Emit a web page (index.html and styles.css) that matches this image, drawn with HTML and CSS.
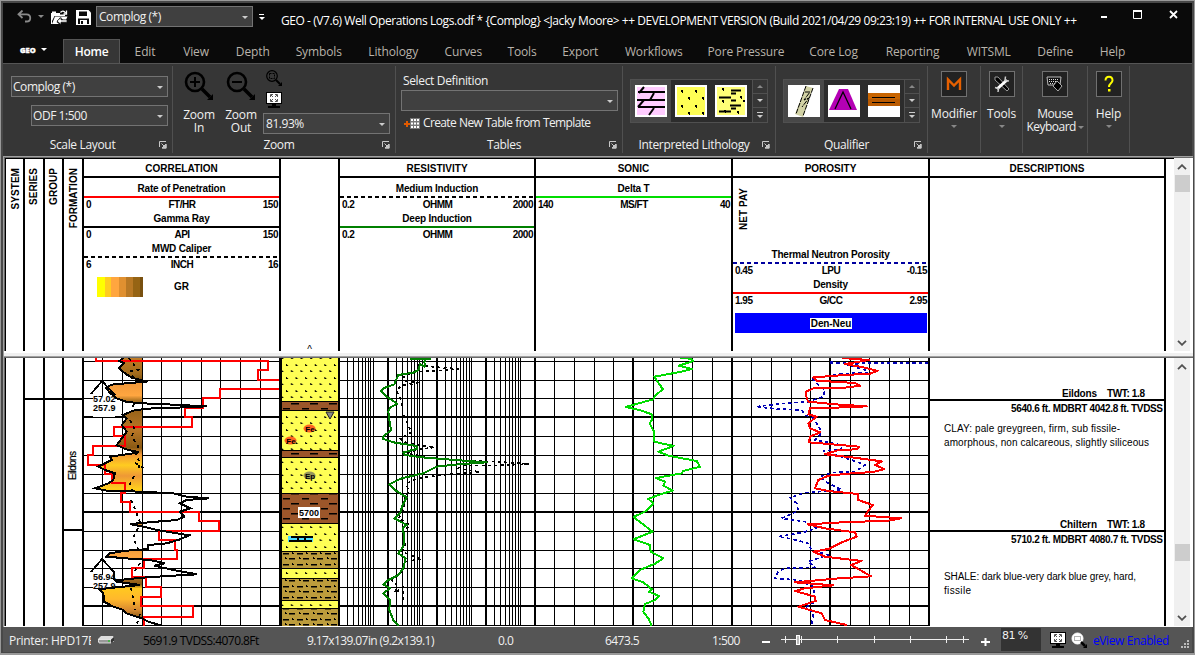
FILE: index.html
```html
<!DOCTYPE html>
<html lang="en">
<head>
<meta charset="utf-8">
<title>GEO - Well Operations Logs</title>
<link rel="stylesheet" href="styles.css">
</head>
<body>
<svg width="0" height="0" class="defs">
  <defs>
    <symbol id="launch" viewBox="0 0 8 8"><path d="M.5 6V.5H7M2.500 2.500l3 3M7 3v4H3z" fill="none" stroke="#c8c8c8"/><path d="M7.500 3v4.500H3z" fill="#c8c8c8"/></symbol>
    <symbol id="chev" viewBox="0 0 10 6"><path d="M1 5.200 5 1.200 9 5.200" fill="none" stroke="#505050" stroke-width="1.800"/></symbol>
    <symbol id="fit" viewBox="0 0 16 16"><rect width="16" height="12" fill="#000"/><rect x="1" y="1" width="14" height="10" fill="#fff"/><path d="M4.500 5V2.500H7M9 2.500h2.500V5M11.500 7v2.500H9M7 9.500H4.500V7M5 3l2 2M9 7l2 2M11 3 9 5M7 7 5 9" fill="none" stroke="#555"/><path d="M6 12h4v2H6zM2 14h12v2H2z" fill="#000"/></symbol>
    <symbol id="dotlines" viewBox="0 0 32 32"><path d="M7 3h2v3H8V5H7zM25 11h2v3h-1v-1h-1zM7 15h2v3H8v-1H7zM9 25h2v3h-1v-1H9zM22 26h2v3h-1v-1h-1zM28 15h2v2h-2z"/><path d="M16 5.500h10M16 8.500h5M4 12.500h12M16 15.500h5M15 20.500h11M16 23.500h5M4 26.500h12" stroke="#000" stroke-width="1.800"/></symbol>
  </defs>
</svg>
<div class="window">
  <header class="titlebar">
    <svg class="i-undo" width="15" height="13" viewBox="0 0 15 13"><path d="M5.500.5 1.500 4.300l4 3.700M2 4.300h7.500c5 0 5 7.200 0 7.200H8" fill="none" stroke="#8a8a8a" stroke-width="1.800"/></svg>
    <i class="tri dim t-undo"></i>
    <svg class="i-open" width="17" height="15" viewBox="0 0 17 15"><path d="M0 3h1V1.500h4V3h4v1.500h5V6H3.500L1 11v3H0z" fill="#fff"/><path d="M4 6.500h12.500L14 12h-2V9.500L9 7.500 5.500 12 8 14H1z" fill="#fff"/><path d="M9.500 2.500c1.500-2 3.500-2 5 .5M15.500.5v3.500h-3" fill="none" stroke="#fff" stroke-width="1.300"/><path d="M6 11 10 7.500v2.300h6v2.400h-6v2.300z" fill="#fff" stroke="#0a0a0a" stroke-width=".7"/></svg>
    <svg class="i-save" width="15" height="15" viewBox="0 0 15 15"><path d="M0 0h12.500L15 2.500V15H0z" fill="#fff"/><path d="M3 1.500h8v4.500H3zM2 8.500h11V14H2z" fill="#0a0a0a"/><path d="M4 10h7v4H4z" fill="#fff"/><path d="M5 11h2v3H5z" fill="#0a0a0a"/></svg>
    <div class="combo c-title"><span>Complog (*)</span><i class="tri"></i></div>
    <div class="more"><b></b><i class="tri white"></i></div>
    <div class="caption">GEO - (V7.6) Well Operations Logs.odf * {Complog} &lt;Jacky Moore&gt; ++ DEVELOPMENT VERSION (Build 2021/04/29 09:23:19) ++ FOR INTERNAL USE ONLY ++</div>
    <svg class="winbtns" width="78" height="12" viewBox="0 0 78 12"><path d="M0 8h6" stroke="#fff" stroke-width="2"/><path d="M32.500 1.500h8v8h-8z" fill="none" stroke="#fff"/><path d="M32 2h9" stroke="#fff" stroke-width="2"/><path d="m69 2 7 7m0-7-7 7" stroke="#fff" stroke-width="1.800"/></svg>
  </header>
  <nav class="tabs">
    <div class="app"><b>GEO</b><i class="tri white"></i></div>
    <div class="tab active">Home</div><div class="tab">Edit</div><div class="tab">View</div><div class="tab">Depth</div><div class="tab">Symbols</div><div class="tab">Lithology</div><div class="tab">Curves</div><div class="tab">Tools</div><div class="tab">Export</div><div class="tab">Workflows</div><div class="tab">Pore Pressure</div><div class="tab">Core Log</div><div class="tab">Reporting</div><div class="tab">WITSML</div><div class="tab">Define</div><div class="tab">Help</div>
  </nav>
  <section class="ribbon">
    <div class="group">
      <div class="body scale">
        <div class="combo"><span>Complog (*)</span><i class="tri"></i></div>
        <div class="combo narrow"><span>ODF 1:500</span><i class="tri"></i></div>
      </div>
      <div class="foot"><span>Scale Layout</span><svg width="8" height="8"><use href="#launch"/></svg></div>
    </div>
    <div class="group">
      <div class="body zoom">
        <div class="big"><svg width="30" height="30" viewBox="0 0 30 30"><circle cx="11" cy="11" r="9" fill="none" stroke="#000" stroke-width="2.600"/><path d="M6 11h10M11 6v10" stroke="#000" stroke-width="2"/><path d="m18 18 8 8" stroke="#000" stroke-width="3.500"/><path d="M29 23v6h-6z"/></svg><span>Zoom<br>In</span></div>
        <div class="big"><svg width="30" height="30" viewBox="0 0 30 30"><circle cx="11" cy="11" r="9" fill="none" stroke="#000" stroke-width="2.600"/><path d="M6 11h10" stroke="#000" stroke-width="2"/><path d="m18 18 8 8" stroke="#000" stroke-width="3.500"/><path d="M29 23v6h-6z"/></svg><span>Zoom<br>Out</span></div>
        <div class="zcol">
          <svg width="17" height="17" viewBox="0 0 17 17"><circle cx="6" cy="6" r="5.300" fill="none" stroke="#000" stroke-width="1.200"/><path d="M3.500 3.500h5v5h-5z" fill="none" stroke="#000" stroke-dasharray="2 1"/><path d="m10 10 4 4" stroke="#000" stroke-width="2"/><path d="M16 12v4h-4z"/></svg>
          <svg width="16" height="16"><use href="#fit"/></svg>
          <div class="combo"><span>81.93%</span><i class="tri"></i></div>
        </div>
      </div>
      <div class="foot"><span>Zoom</span><svg width="8" height="8"><use href="#launch"/></svg></div>
    </div>
    <div class="group">
      <div class="body tables">
        <div class="lbl">Select Definition</div>
        <div class="combo"><span></span><i class="tri"></i></div>
        <div class="create"><svg width="16" height="11" viewBox="0 0 16 11"><path d="M0 6h6M3 3v6" stroke="#e05a00" stroke-width="2"/><path d="M6 0h10v11H6z" fill="#777"/><path d="M7 1h2v2H7zM10 1h2v2h-2zM13 1h2v2h-2zM7 4.500h2v2H7zM10 4.500h2v2h-2zM13 4.500h2v2h-2zM7 8h2v2H7zM10 8h2v2h-2zM13 8h2v2h-2z" fill="#fff"/></svg><span>Create New Table from Template</span></div>
      </div>
      <div class="foot"><span>Tables</span><svg width="8" height="8"><use href="#launch"/></svg></div>
    </div>
    <div class="group">
      <div class="body">
        <div class="gallery">
          <div class="tile sel"><svg width="32" height="32"><rect width="32" height="32" fill="#fff"/><rect x="2" y="2" width="28" height="28" fill="#fcf"/><path d="M3 7h27M2 15h28M3 22h27M9 2 4 8M19 8l-4 7M9 15l-6 7M19 23l-5 7" stroke="#000" stroke-width="2" fill="none"/></svg></div>
          <div class="tile"><svg width="32" height="32"><rect width="32" height="32" fill="#fff"/><rect x="2" y="2" width="28" height="28" fill="#ff5"/><path d="M6 5h2v3H7V7H6zM20 5h2v3h-1V7h-1zM13 12h2v3h-1v-1h-1zM27 12h2v3h-1v-1h-1zM6 20h2v3H7v-1H6zM20 20h2v3h-1v-1h-1zM13 27h2v3h-1v-1h-1zM27 27h2v3h-1v-1h-1z"/></svg></div>
          <div class="tile"><svg width="32" height="32"><rect width="32" height="32" fill="#fff"/><rect x="2" y="2" width="28" height="28" fill="#ff7"/><use href="#dotlines" width="32" height="32"/></svg></div>
          <div class="spin"><span><i class="tri up"></i></span><span><i class="tri"></i></span><span><b></b><i class="tri"></i></span></div>
        </div>
      </div>
      <div class="foot"><span>Interpreted Lithology</span><svg width="8" height="8"><use href="#launch"/></svg></div>
    </div>
    <div class="group">
      <div class="body">
        <div class="gallery">
          <div class="tile sel"><svg width="32" height="32"><rect width="32" height="32" fill="#fff"/><path d="M18 1 25 3 15 32 7 29z" fill="#d2d2a5"/><path d="M18 1 8 29M25 3 15 31M17 7l5 0-6 8 5-2-7 9" fill="none" stroke="#000" stroke-dasharray="5 1"/></svg></div>
          <div class="tile"><svg width="32" height="32"><rect width="32" height="32" fill="#fff"/><path d="M11 4h9l9 21H1z" fill="#b400b4"/><path d="M7 24 15 7l8 17" fill="none" stroke="#000" stroke-width="1.300"/></svg></div>
          <div class="tile"><svg width="32" height="32"><rect width="32" height="32" fill="#fff"/><rect y="8" width="32" height="13" fill="#c86400"/><path d="M0 14h32v7H0z" fill="#b95a00"/><path d="M4 12.500h23M4 17.500h23" stroke="#000"/></svg></div>
          <div class="spin"><span><i class="tri up"></i></span><span><i class="tri"></i></span><span><b></b><i class="tri"></i></span></div>
        </div>
      </div>
      <div class="foot"><span>Qualifier</span><svg width="8" height="8"><use href="#launch"/></svg></div>
    </div>
    <div class="group tool"><svg width="26" height="26"><rect x=".5" y=".5" width="25" height="25" fill="#222" stroke="#707070"/><path d="M7 19V8.500l6 6 6-6V19" fill="none" stroke="#e66000" stroke-width="2.400"/></svg><span>Modifier</span><i class="tri dim"></i></div>
    <div class="group tool"><svg width="26" height="26"><rect x=".5" y=".5" width="25" height="25" fill="#222" stroke="#707070"/><path d="M6 6l3 0 11 12-2 2L6 9z" fill="#000" stroke="#999"/><path d="M18 9 8 18" stroke="#fff" stroke-width="3"/><path d="M16.500 5.500 16 9.500l4 .5M6 16.500l3.500 1-.5 3.500" fill="none" stroke="#ccc" stroke-width="1.500"/></svg><span>Tools</span><i class="tri dim"></i></div>
    <div class="group tool mouse"><svg width="26" height="26"><rect x=".5" y=".5" width="25" height="25" fill="#222" stroke="#707070"/><path d="M5 6h14l-1 8H6z" fill="#111" stroke="#bbb"/><path d="M7 8.500h10M7 10.500h8M8 12.500h6" stroke="#ddd" stroke-dasharray="1 1"/><path d="m15 10 5 5-4 5-5-5z" fill="#000" stroke="#aaa" stroke-width="1"/></svg><span>Mouse<br>Keyboard <i class="tri dim"></i></span></div>
    <div class="group tool"><svg width="26" height="26"><rect x=".5" y=".5" width="25" height="25" fill="#222" stroke="#707070"/><path d="M9.500 9.500c0-5 7-5 7 0 0 2.500-3.500 2.500-3.500 6.500" fill="none" stroke="#ff0" stroke-width="2"/><path d="M12 18h2.500v2.500H12z" fill="#ff0"/></svg><span>Help</span><i class="tri dim"></i></div>
  </section>
  <main class="work">
    <div class="pane">
      <div class="heads">
        <div class="h side"><span>SYSTEM</span></div>
        <div class="h side"><span>SERIES</span></div>
        <div class="h side"><span>GROUP</span></div>
        <div class="h side"><span>FORMATION</span></div>
        <div class="h"><h2>CORRELATION</h2>
          <div class="curve red"><p>Rate of Penetration</p><div><span>0</span><span>FT/HR</span><span>150</span></div></div>
          <div class="curve"><p>Gamma Ray</p><div><span>0</span><span>API</span><span>150</span></div></div>
          <div class="curve dash"><p>MWD Caliper</p><div><span>6</span><span>INCH</span><span>16</span></div></div>
          <div class="shade"><i></i><span>GR</span></div>
        </div>
        <div class="h depth"><span>^</span></div>
        <div class="h"><h2>RESISTIVITY</h2>
          <div class="curve dash"><p>Medium Induction</p><div><span>0.2</span><span>OHMM</span><span>2000</span></div></div>
          <div class="curve green"><p>Deep Induction</p><div><span>0.2</span><span>OHMM</span><span>2000</span></div></div>
        </div>
        <div class="h"><h2>SONIC</h2>
          <div class="curve lime"><p>Delta T</p><div><span>140</span><span>MS/FT</span><span>40</span></div></div>
        </div>
        <div class="h"><h2>POROSITY</h2>
          <div class="netpay"><span>NET PAY</span></div>
          <div class="curve dash blue"><p>Thermal Neutron Porosity</p><div><span>0.45</span><span>LPU</span><span>-0.15</span></div></div>
          <div class="curve red"><p>Density</p><div><span>1.95</span><span>G/CC</span><span>2.95</span></div></div>
          <div class="denneu"><span>Den-Neu</span></div>
        </div>
        <div class="h"><h2>DESCRIPTIONS</h2></div>
        <div class="h"></div>
      </div>
      <div class="scroll s-top"><svg width="10" height="6"><use href="#chev"/></svg><i></i><svg class="dn" width="10" height="6"><use href="#chev"/></svg></div>
    </div>
    <div class="split"></div>
    <div class="pane">
      <svg class="log" width="1169" height="268" viewBox="5 358 1169 268">
        <defs>
          <pattern id="sand" x="285" y="363" width="9.600" height="13" patternUnits="userSpaceOnUse"><rect width="10" height="13" fill="#ff5"/><path d="M1 1h1v1h1v1H1zM6 7h1v1h1v1H6z"/></pattern>
          <pattern id="clay" x="282" y="401" width="19" height="10" patternUnits="userSpaceOnUse"><rect width="19" height="10" fill="#9c562a"/><path d="M9 2h8v1.500H9zM1 7h7v1.500H1z"/></pattern>
          <pattern id="silt" x="282" y="551" width="14" height="11" patternUnits="userSpaceOnUse"><rect width="14" height="11" fill="#bc9c3c"/><path d="M1 2h6v1.400H1zM10 1h1v1h1v1h-2zM7 7h6v1.400H7zM3 6h1v1h1v1H3z"/></pattern>
          <linearGradient id="gr" gradientUnits="userSpaceOnUse" x1="0" x2="0" y1="358" y2="626">
            <stop offset="0" stop-color="#c07a24"/><stop offset=".06" stop-color="#a06a1c"/><stop offset=".082" stop-color="#7c5210"/><stop offset=".09" stop-color="#f0983a"/><stop offset=".14" stop-color="#ffa640"/><stop offset=".16" stop-color="#a87020"/><stop offset=".2" stop-color="#9a641a"/><stop offset=".27" stop-color="#b87626"/><stop offset=".335" stop-color="#8a5a14"/><stop offset=".36" stop-color="#f09636"/><stop offset=".4" stop-color="#ffcc20"/><stop offset=".44" stop-color="#ee9836"/><stop offset=".49" stop-color="#ffd01c"/><stop offset=".51" stop-color="#c47c28"/><stop offset=".7" stop-color="#e89838"/><stop offset=".74" stop-color="#ffa640"/><stop offset=".8" stop-color="#c88030"/><stop offset=".845" stop-color="#8a5a14"/><stop offset=".86" stop-color="#ffc820"/><stop offset=".9" stop-color="#ffb82c"/><stop offset=".94" stop-color="#d88a30"/><stop offset=".97" stop-color="#8a5a14"/><stop offset="1" stop-color="#8a5a14"/>
          </linearGradient>
          <clipPath id="left"><path d="M83 358h59v268H83z"/></clipPath>
          <path id="gamma" d="M370 38 358 48 372 55 357 70 375 85 395 98 442 110 400 113 335 119 318 128 328 142 350 160 380 171 430 175 500 178 620 184 530 188 440 191 400 197 368 210 380 220 365 240 380 260 365 280 350 300 375 312 417 322 380 328 330 335 335 345 295 365 315 375 345 385 340 405 325 415 285 430 320 437 420 440 520 445 560 455 627 460 560 465 540 475 570 490 540 500 553 515 530 525 470 530 390 537 430 545 470 555 530 565 568 571 540 583 500 595 445 600 445 612 380 617 330 625 320 635 390 641 450 645 495 655 462 662 530 677 592 688 520 692 440 697 345 706 350 710 420 720 340 728 297 733 310 745 312 770 340 785 370 795 380 805 425 820 450 832 488 842"/>
        </defs>
        <rect x="5" y="358" width="1169" height="268" fill="#fff"/>
        <g shape-rendering="crispEdges" stroke="#000" fill="none">
          <path d="M83 361.500H929M83 380.500H929M83 398.500H929M83 436.500H929M83 455.500H929M83 474.500H929M83 493.500H929M83 531.500H929M83 550.500H929M83 568.500H929M83 587.500H929M83 625.500H929"/>
          <path d="M83 417H929M83 512H929M83 606H929" stroke-width="2"/>
          <path d="M102.500 358v268M122.500 358v268M142.500 358v268M161.500 358v268M181.500 358v268M201.500 358v268M220.500 358v268M240.500 358v268M260.500 358v268"/>
          <path d="M347.500 358v268M353.500 358v268M358.500 358v268M362.500 358v268M365.500 358v268M368.500 358v268M370.500 358v268M373.500 358v268M396.500 358v268M402.500 358v268M407.500 358v268M411.500 358v268M414.500 358v268M417.500 358v268M419.500 358v268M422.500 358v268M445.500 358v268M451.500 358v268M456.500 358v268M460.500 358v268M463.500 358v268M466.500 358v268M469.500 358v268M471.500 358v268M494.500 358v268M500.500 358v268M505.500 358v268M509.500 358v268M512.500 358v268M515.500 358v268M518.500 358v268M520.500 358v268"/>
          <path d="M388 358v268M437 358v268M486 358v268M633 358v268M830 358v268" stroke-width="2"/>
          <path d="M554.500 358v268M574.500 358v268M594.500 358v268M613.500 358v268M653.500 358v268M672.500 358v268M692.500 358v268M712.500 358v268M751.500 358v268M771.500 358v268M791.500 358v268M810.500 358v268M850.500 358v268M869.500 358v268M889.500 358v268M909.500 358v268"/>
          <path d="M24 358v268M44 358v268M63 358v268M83 358v268M339 358v268M535 358v268M732 358v268M929 358v268M1165 358v268M24 399h59M63 530h20M929 400h236M929 531h236" stroke-width="2"/>
          <path d="M5.500 358v268"/>
        </g>
        <g clip-path="url(#left)"><g transform="translate(0 345) scale(.33333)"><path d="M427 38H370L358 48 372 55 357 70 375 85 395 98 442 110 400 113 335 119 318 128 328 142 350 160 380 171 430 175 620 184 440 191 400 197 368 210 380 220 365 240 380 260 365 280 350 300 375 312 417 322 380 328 330 335 335 345 295 365 315 375 345 385 340 405 325 415 285 430 320 437 427 440 627 460 553 515 470 530 390 537 430 545 568 571 445 612 380 617 330 625 320 635 390 641 450 645 592 688 440 697 345 706 350 710 420 720 340 728 297 733 310 745 312 770 340 785 370 795 380 805 427 820z" fill="url(#gr2)"/></g></g>
        <linearGradient id="gr2" href="#gr" gradientTransform="scale(3) translate(0 -345)"/>
        <g shape-rendering="crispEdges">
          <path d="M96 358V361H268V370H258V380H280M280 389H220V398H203V408H185V417H192V427H114V436H125V446H93V455H88V465H105V474H112V483H125V493H121V502H130V512H199V521H219V531H159V540H175V550H177V559H144V568H132V577H146V587H161V597H141V606H193V617H144V626" fill="none" stroke="#f00" stroke-width="2"/>
          <path d="M93 396h22v21H93zM93 575h22v13H93z" fill="#fff"/>
        </g>
        <g class="val"><text x="93" y="401.500">57.02</text><text x="93" y="411">257.9</text><text x="93" y="580">56.94</text><text x="93" y="589">257.9</text></g>
        <g fill="none" stroke="#000" shape-rendering="crispEdges" stroke-width="1.800">
          <path d="m91 394 11-13 13 14M91 572l11-13 12 13v6"/>
          <path d="M129 358l5 7-3 6 11-2M132 376l6 6M134 404l-3 5M130 420l4 8-2 9 6 9-2 8 4 9-2 8M135 463l10 6M134 476l-4 8 3 9M131 500l5 12 4 10M138 528l-4 8 2 10 4 6M140 563l-5 8M131 588l2 10 2 12M140 614l-3 10" stroke-dasharray="3 4"/>
          <use href="#gamma" transform="translate(0 345) scale(.33333)" stroke-width="6"/>
        </g>
        <g shape-rendering="crispEdges">
          <rect x="281" y="358" width="57" height="268" fill="url(#sand)"/>
          <path d="M281 401h57v9h-57zM281 450h57v7h-57zM281 493h57v30h-57z" fill="url(#clay)" stroke="#000"/>
          <path d="M281 551h57v17h-57zM281 578h57v22h-57zM281 608h57v20h-57z" fill="url(#silt)" stroke="#000"/>
          <path d="M280.500 358v268" stroke="#000" stroke-width="3"/>
          <rect x="298" y="507" width="22" height="11" fill="#fff"/>
          <path d="M288 536h25v6h-25z" fill="#4cdcff"/><path d="M291 537h22M289 541h23M298 537v4M305 537v4" stroke="#000" stroke-width="1.500"/>
        </g>
        <path d="M326 412h8l-4 7z" fill="#888" stroke="#222"/>
        <ellipse cx="309.500" cy="428.500" rx="6" ry="4" fill="#ff6420"/><ellipse cx="290.500" cy="440.500" rx="6" ry="4" fill="#ff6420"/><ellipse cx="309.500" cy="475.500" rx="6" ry="4" fill="#96965a"/>
        <g class="sym"><text x="310" y="431.500">Fe</text><text x="291" y="443.500">Fe</text><text x="310" y="478.500">Ep</text></g>
        <text class="d5700" x="309" y="516">5700</text>
        <g fill="none" shape-rendering="crispEdges" stroke-linejoin="round">
          <g transform="translate(335 345) scale(.33333)">
            <path d="M250 60 300 66 370 72 300 78 240 80 205 95 210 108 250 113 200 122 185 135 190 150 200 165 203 200 215 230 230 262 195 280 215 295 300 307 250 313 215 325 280 338 380 347 480 350 583 357 470 362 380 362 370 370 435 381 320 390 250 400 215 415 220 440 210 460 205 500 190 520 225 540 205 560 210 600 200 620 260 642 210 650 200 680 170 705 185 720 180 745 205 725 205 765" stroke="#000" stroke-width="5" stroke-dasharray="9 10"/>
            <path d="M225 41H287M275 38 268 50 270 65 255 58 250 75 235 83 190 90 183 105 178 118 145 130 138 138 155 155 187 176 165 188 160 200 163 225 168 255 145 275 145 282 180 293 245 303 245 312 205 322 210 330 260 337 360 345 455 352 370 358 305 365 285 375 265 385 200 400 163 418 180 435 215 457 203 480 195 505 178 520 215 540 203 550 208 575 205 605 190 625 212 640 205 670 190 690 160 705 145 718 165 730 145 745 165 765 163 795 175 825 190 842" stroke="#008000" stroke-width="6"/>
            <path d="M1035 39 1068 41 1075 48 1032 62 1071 72 1040 80 958 95 968 110 984 133 962 150 955 163 900 178 873 186 920 197 950 208 952 222 944 235 957 260 957 290 1016 303 970 320 1000 332 1085 348 1095 365 1045 378 1040 385 963 399 990 410 985 422 1013 437 970 450 940 462 955 475 935 497 896 516 920 535 953 560 896 583 945 600 947 620 985 640 960 656 915 675 890 700 925 712 950 732 942 740 972 753 960 765 930 777 925 800 940 820 950 842" stroke="#00dc00" stroke-width="6"/>
          </g>
          <g transform="translate(725 345) scale(.33333)">
            <path d="M315 55H612M315 50 400 60M360 57 420 75 430 82 340 87 260 100 280 120 300 135 295 155 250 170 180 175 92 185 160 192 230 195 240 210 265 220 285 250 285 270 270 285 350 300 350 312 295 318 380 345 420 360 390 380 320 383 285 395 300 410 350 435 240 443 195 458 215 475 220 497 170 520 240 530 275 550 235 562 160 575 200 582 250 595 260 615 310 630 250 650 270 667 180 670 160 680 150 700 220 705 265 725 270 770 245 785 265 805 260 840" stroke="#0000b4" stroke-width="5" stroke-dasharray="10 9"/>
            <path d="M352 39 432 45 360 57 420 68 458 78 435 86 360 90 265 97 275 107 390 114 405 122 360 128 265 130 243 140 245 160 250 170 330 178 425 184 330 188 255 190 250 208 275 215 250 235 255 250 285 262 255 275 252 292 310 297 402 305 395 313 340 315 300 328 380 337 470 349 450 360 478 372 445 381 380 385 310 392 280 405 270 430 310 438 400 447 400 465 443 480 420 512 528 520 490 527 350 532 248 538 300 550 390 562 395 575 350 592 310 612 265 620 300 635 410 648 378 660 405 675 438 694 330 701 210 712 325 721 240 730 210 738 270 755 272 768 220 785 290 805 300 825 365 840" stroke="#f00" stroke-width="6"/>
          </g>
        </g>
        <text class="form" transform="translate(76 480) rotate(-90)" textLength="29">Eildons</text>
        <g class="top">
          <text x="1062" y="397" textLength="35">Eildons</text><text x="1107" y="397" textLength="38">TWT: 1.8</text><text x="1011" y="412" textLength="152">5640.6 ft. MDBRT 4042.8 ft. TVDSS</text>
          <text x="1060" y="528" textLength="37">Chiltern</text><text x="1107" y="528" textLength="38">TWT: 1.8</text><text x="1011" y="543" textLength="152">5710.2 ft. MDBRT 4080.7 ft. TVDSS</text>
        </g>
        <g class="desc">
          <text x="944" y="432" textLength="176">CLAY: pale greygreen, firm, sub fissile-</text><text x="944" y="446" textLength="205">amorphous, non calcareous, slightly siliceous</text>
          <text x="944" y="580" textLength="192">SHALE: dark blue-very dark blue grey, hard,</text><text x="944" y="594" textLength="27">fissile</text>
        </g>
      </svg>
      <div class="scroll s-log"><svg width="10" height="6"><use href="#chev"/></svg><i></i><svg class="dn" width="10" height="6"><use href="#chev"/></svg></div>
    </div>
  </main>
  <footer class="status">
    <span class="clip">Printer: HPD17B8</span>
    <svg width="16" height="9" viewBox="0 0 16 9"><path d="M3 1h12l1 2v4H0V4z" fill="#ddd"/><path d="M0 4.500h13V8H1z" fill="#999" stroke="#eee" stroke-width=".8"/><path d="M13 4.500 16 2v4l-3 2z" fill="#333"/><path d="M10 5.500h2v1h-2z" fill="#0c0"/></svg>
    <span class="ink">5691.9 TVDSS:4070.8Ft</span>
    <span class="size">9.17x139.07in (9.2x139.1)</span>
    <span>0.0</span>
    <span>6473.5</span>
    <span>1:500</span>
    <svg class="slider" width="229" height="16" viewBox="0 0 229 16"><path d="M0 10h8M219 10h9M223.500 6v8" stroke="#fff" stroke-width="2"/><path d="M19 7.500h188M23.500 4v7M39.500 4v7M75.500 4v7M112.500 4v7M148.500 4v7M184.500 4v7M201.500 4v7" stroke="#eee"/><rect x="34.500" y="3.500" width="3" height="9" fill="#bbb" stroke="#fff"/></svg>
    <div class="pct">81 %</div>
    <svg width="16" height="16"><use href="#fit"/></svg>
    <svg width="17" height="16" viewBox="0 0 17 16"><circle cx="6.500" cy="6.500" r="5.500" fill="#fff" stroke="#fff"/><path d="M3.500 4.500h6v4h-6z" fill="none" stroke="#666" stroke-dasharray="1 1"/><path d="m10 10 4 4" stroke="#000" stroke-width="2.500"/><path d="M16 12v4h-4z"/></svg>
    <span class="link">eView Enabled</span>
    <svg class="grip" width="9" height="9" viewBox="0 0 9 9"><path d="M6 0h2v2H6zM3 3h2v2H3zM6 3h2v2H6zM0 6h2v2H0zM3 6h2v2H3zM6 6h2v2H6z" fill="#bbb"/></svg>
  </footer>
</div>
</body>
</html>
```
FILE: styles.css
```css
* { box-sizing: border-box; }
body { margin: 0; font: 12px/14px "Open Sans", "Noto Sans", sans-serif; color: #f0f0f0; overflow: hidden; }
p, h2 { margin: 0; }
svg { display: block; flex: none; }
.defs { position: absolute; }
.window { width: 1195px; height: 655px; background: #0a0a0a; border: 1px solid #999; border-bottom-width: 2px; box-shadow: inset 0 0 0 2px #484848; padding: 2px 2px 0; display: flex; flex-direction: column; }

.tri { display: inline-block; width: 0; height: 0; border: 3px solid transparent; border-top: 3px solid #ccc; border-bottom: 0; }
.tri.dim { border-top-color: #888; }
.tri.white { border-top-color: #fff; }
.tri.up { border-top: 0; border-bottom: 3px solid #888; }

.titlebar { height: 36px; display: flex; align-items: flex-start; padding-left: 14px; }
.i-undo { margin-top: 7px; }
.t-undo { margin: 12px 0 0 6px; }
.i-open { margin: 7px 0 0 7px; }
.i-save { margin: 7px 0 0 8px; }
.combo { height: 21px; background: #404040; border: 1px solid #737373; display: flex; align-items: center; justify-content: space-between; padding: 1px 4px 0 1px; letter-spacing: -.45px; }
.c-title { width: 157px; margin: 3px 0 0 5px; padding-left: 2px; }
.more { width: 6px; margin: 11px 0 0 6px; }
.more b { display: block; width: 5px; height: 1px; background: #fff; margin-bottom: 2px; }
.more .tri, .spin .tri { display: block; }
.caption { margin: 11px 0 0 16px; width: 796px; white-space: nowrap; color: #fff; letter-spacing: -.44px; }
.winbtns { margin: 6px 0 0 24px; }

.tabs { height: 24px; display: grid; grid-template-columns: 60px 57px 49px 53px 60.5px 71.5px 77.500px 62.500px 55px 61.500px 85.500px 99px 76px 82px 70.500px 62.500px 52px; }
.tab { text-align: center; line-height: 24px; color: #b9b3ab; white-space: nowrap; letter-spacing: -.12px; padding: 1px 0 0 1px; }
.active { background: #363636; border: 1px solid #555; border-bottom: 0; color: #fff; font-weight: 600; letter-spacing: -.3px; padding: 0; }
.app { display: flex; align-items: center; gap: 5px; padding: 0 0 4px 17px; color: #fff; }
.app b { font-size: 7.500px; font-weight: 800; line-height: 14px; -webkit-text-stroke: .4px #fff; }

.ribbon { height: 93px; background: #363636; border-top: 1px solid #555; display: grid; grid-template-columns: 170px 223px 227px 153px 152px 53px 42px 65px 42px; padding: 2px 0 3px; }
.group { border-right: 1px solid #505050; display: flex; flex-direction: column; min-width: 0; white-space: nowrap; }
.body { height: 72px; }
.foot { display: flex; justify-content: flex-end; align-items: center; padding: 0 5px 0 0; height: 14px; }
.foot span { flex: 1; text-align: center; padding-right: 5px; letter-spacing: -.33px; padding-left: 8px; }
.foot svg { margin-top: -1px; }
.scale { padding: 10px 4px 0 8px; }
.narrow { margin: 8px 0 0 20px; }
.zoom { display: flex; padding-left: 5px; }
.big { width: 42px; display: flex; flex-direction: column; align-items: center; text-align: center; line-height: 13px; padding-top: 5px; gap: 7px; letter-spacing: -.2px; }
.zcol { padding: 4px 0 0 1px; }
.zcol svg { margin: 0 0 5px 3px; }
.zcol .combo { width: 127px; margin-top: 3px; padding-left: 2px; }
.tables { padding: 8px 4px 0 5px; }
.tables .lbl { padding-left: 2px; letter-spacing: -.35px; }
.tables .combo { margin-top: 2px; }
.create { display: flex; align-items: center; gap: 3px; margin: 5px 0 0 3px; letter-spacing: -.64px; word-spacing: .5px; }
.gallery { margin: 13px 7px 0; height: 44px; border: 1px solid #505050; background: #2c2c2c; display: flex; }
.tile { width: 40px; padding: 5px 4px; }
.tile.sel { background: #484848; }
.spin { margin-left: auto; width: 15px; display: grid; grid-template-rows: 1fr 1fr 1fr; border-left: 1px solid #505050; background: #363636; }
.spin span { display: flex; flex-direction: column; align-items: center; justify-content: center; border-bottom: 1px solid #505050; }
.spin span:last-child { border: 0; }
.spin b { width: 6px; height: 1px; background: #ccc; margin-bottom: 2px; }
.tool { align-items: center; padding-top: 5px; letter-spacing: -.15px; }
.tool > span { margin-top: 10px; text-align: center; line-height: 13px; }
.tool > .tri { margin-top: 5px; }
.mouse > span { letter-spacing: -.5px; }
.mouse .tri { vertical-align: middle; margin-left: -1px; }

.work { background: #fff; border-top: 1px solid #a0a0a0; border-left: 1px solid #a0a0a0; height: 471px; margin-right: -1px; }
.pane { display: flex; border-top: 1px solid #696969; border-left: 1px solid #696969; }
.heads { width: 1169px; height: 193px; border-top: 1px solid #000; display: grid; grid-template-columns: 18px 20px 19px 20px 197px 59px 196px 197px 197px 236px 10px; color: #000; font: bold 10px/16px "Liberation Sans", sans-serif; }
.h { border-left: 2px solid #000; white-space: nowrap; min-height: 0; overflow: hidden; }
.side { padding: 9px 0 0 1px; }
.side:first-child { border-left-width: 1px; padding-left: 2px; }
.side span, .netpay span { writing-mode: vertical-rl; transform: rotate(180deg); display: block; width: 15px; line-height: 15px; letter-spacing: .05px; }
.side:nth-child(4) { padding-left: 2px; }
h2 { font-size: 10px; line-height: 19px; height: 19px; border-bottom: 2px solid #000; margin-bottom: 3px; text-align: center; }
.curve { height: 30px; }
.curve p { height: 17px; text-align: center; border-bottom: 2px solid #000; letter-spacing: -.2px; }
.curve div { display: grid; grid-template-columns: 40px 1fr 40px; padding: 0 1px 0 2px; line-height: 14px; letter-spacing: -.5px; text-align: center; }
.curve div span:first-child { text-align: left; }
.curve div span:last-child { text-align: right; }
.dash p { border-bottom: 0; background: repeating-linear-gradient(90deg, #000 0 4px, #fff 4px 7px) bottom / 100% 2px no-repeat; }
.blue p { background-image: repeating-linear-gradient(90deg, #0000a0 0 4px, #fff 4px 7px); }
.red p { border-color: #f00; }
.green p { border-color: #008000; }
.lime p { border-color: #00dc00; }
.shade { display: flex; align-items: center; margin: 6px 0 0 13px; gap: 31px; }
.shade i { width: 46px; height: 20px; background: linear-gradient(90deg, #ff0 0 8px, #ffcc20 8px 14px, #ffa63f 14px 22px, #e09030 22px 29px, #b87824 29px 36px, #966414 36px 43px, #785010 43px); }
.depth { text-align: center; font-weight: normal; display: flex; justify-content: center; align-items: flex-end; line-height: 2px; }
.netpay { height: 66px; padding: 7px 0 0 3px; }
.denneu { margin: 6px 1px 0 2px; height: 20px; background: #00f; display: flex; align-items: center; justify-content: center; }
.denneu span { background: #fff; line-height: 11px; padding: 0 1px; letter-spacing: -.1px; }
.scroll { width: 16px; background: #f0f0f0; display: flex; flex-direction: column; align-items: center; padding: 6px 0 5px; }
.scroll i { width: 15px; height: 17px; background: #cdcdcd; }
.dn { margin-top: auto; transform: rotate(180deg); }
.s-top i { margin-top: 5px; }
.s-log i { margin-top: 174px; }
.split { height: 6px; background: #f0f0f0; border-bottom: 1px solid #a0a0a0; box-shadow: inset 0 2px #fff; }
.val { font: bold 9px "Liberation Sans", sans-serif; }
.sym { font: bold 8px "Liberation Sans", sans-serif; text-anchor: middle; }
.d5700 { font: bold 9px "Liberation Sans", sans-serif; text-anchor: middle; }
.form { font: 10px "Liberation Sans", sans-serif; stroke: #000; stroke-width: .2px; }
.top { font: bold 10px "Liberation Sans", sans-serif; }
.desc { font: 10px "Liberation Sans", sans-serif; }

.status { height: 25px; background: #555; display: grid; grid-template-columns: 89px 45px 164px 191px 107px 107px 50px 239px 49px 21px 22px 88px 12px; align-items: center; padding-left: 6px; white-space: nowrap; letter-spacing: -.55px; }
.status > span { padding-top: 2px; }
.clip { width: 82px; overflow: hidden; letter-spacing: -.3px; }
.size { letter-spacing: -.6px; }
.slider { margin-top: 1px; }
.ink { color: #000; }
.pct { width: 40px; height: 23px; background: #333; font: 11px/14px "DejaVu Sans", sans-serif; padding: 1px 0 0 1px; }
.link { color: #00f; letter-spacing: -.4px; }
.grip { margin-top: 10px; }
```
